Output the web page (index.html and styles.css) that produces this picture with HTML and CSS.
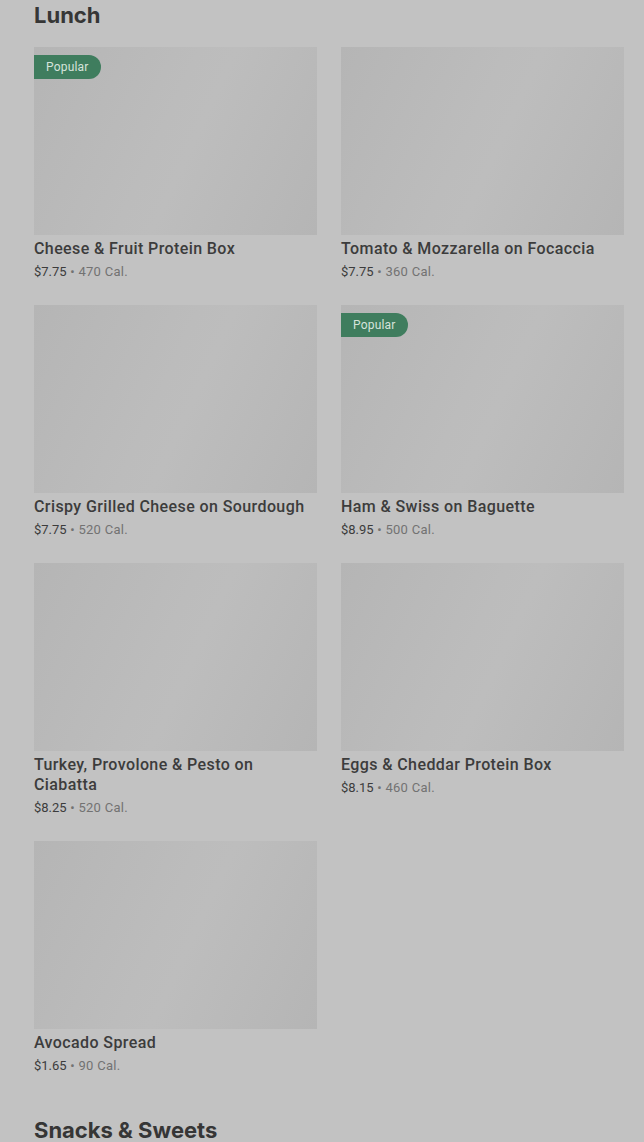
FILE: index.html
```html
<!DOCTYPE html>
<html>
<head>
<meta charset="utf-8">
<link rel="stylesheet" href="styles.css">
</head>
<body>
<main class="page">
  <section class="section">
    <h2 class="section-title">Lunch</h2>
    <div class="grid">
      <div class="card">
        <div class="thumb"><span class="badge">Popular</span></div>
        <div class="name">Cheese &amp; Fruit Protein Box</div>
        <div class="meta"><span class="price">$7.75</span> • 470 Cal.</div>
      </div>
      <div class="card">
        <div class="thumb"></div>
        <div class="name">Tomato &amp; Mozzarella on Focaccia</div>
        <div class="meta"><span class="price">$7.75</span> • 360 Cal.</div>
      </div>
      <div class="card">
        <div class="thumb"></div>
        <div class="name">Crispy Grilled Cheese on Sourdough</div>
        <div class="meta"><span class="price">$7.75</span> • 520 Cal.</div>
      </div>
      <div class="card">
        <div class="thumb"><span class="badge">Popular</span></div>
        <div class="name">Ham &amp; Swiss on Baguette</div>
        <div class="meta"><span class="price">$8.95</span> • 500 Cal.</div>
      </div>
      <div class="card">
        <div class="thumb"></div>
        <div class="name">Turkey, Provolone &amp; Pesto on Ciabatta</div>
        <div class="meta"><span class="price">$8.25</span> • 520 Cal.</div>
      </div>
      <div class="card">
        <div class="thumb"></div>
        <div class="name">Eggs &amp; Cheddar Protein Box</div>
        <div class="meta"><span class="price">$8.15</span> • 460 Cal.</div>
      </div>
      <div class="card">
        <div class="thumb"></div>
        <div class="name">Avocado Spread</div>
        <div class="meta"><span class="price">$1.65</span> • 90 Cal.</div>
      </div>
    </div>
  </section>
  <section class="section next">
    <h2 class="section-title">Snacks &amp; Sweets</h2>
  </section>
</main>
</body>
</html>
```

FILE: styles.css
```css
html, body {
  margin: 0;
  padding: 0;
  background: #c2c2c2;
}
body {
  font-family: Roboto, "Liberation Sans", sans-serif;
  color: #3a3a3a;
  overflow: hidden;
}
.page {
  padding: 1px 20px 0 34px;
}
.section-title {
  margin: 0;
  font-family: Inter, "Liberation Sans", sans-serif;
  font-size: 22px;
  line-height: 28px;
  font-weight: 700;
  letter-spacing: 0;
  color: #363636;
}
.section.next {
  margin-top: 41px;
}
.grid {
  margin-top: 18px;
  display: grid;
  grid-template-columns: repeat(2, 1fr);
  column-gap: 24px;
  row-gap: 24px;
}
.thumb {
  position: relative;
  height: 188px;
  background: linear-gradient(115deg, #b5b5b5 0%, #bcbcbc 45%, #bdbdbd 55%, #b5b5b5 100%);
}
.badge {
  position: absolute;
  top: 8px;
  left: 0;
  height: 24px;
  line-height: 24px;
  padding: 0 12px;
  border-radius: 0 12px 12px 0;
  background: #3f7d5e;
  color: #d6e3db;
  font-size: 12px;
  letter-spacing: 0.2px;
}
.name {
  margin-top: 4px;
  font-size: 16px;
  line-height: 20px;
  font-weight: 500;
  letter-spacing: 0.4px;
  color: #3c3c3c;
}
.meta {
  margin-top: 4px;
  font-size: 13px;
  line-height: 18px;
  letter-spacing: 0.3px;
  color: #727272;
}
.price {
  color: #3c3c3c;
  letter-spacing: 0;
}
```
